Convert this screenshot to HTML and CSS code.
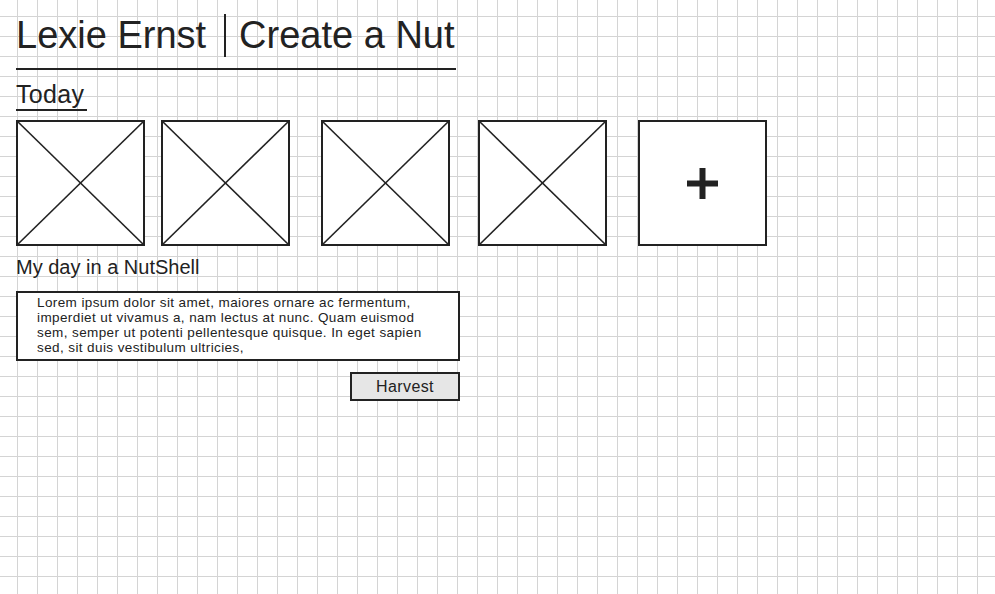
FILE: index.html
```html
<!DOCTYPE html>
<html lang="en">
<head>
<meta charset="utf-8">
<title>Create a Nut</title>
<link rel="stylesheet" href="styles.css">
</head>
<body>
<div class="page">
  <header class="header">
    <span class="name">Lexie Ernst</span>
    <span class="sep"></span>
    <span class="title">Create a Nut</span>
  </header>

  <h2 class="section">Today</h2>

  <div class="photos">
    <div class="photo">
      <svg viewBox="0 0 125 122" preserveAspectRatio="none"><line x1="0" y1="0" x2="125" y2="122"/><line x1="125" y1="0" x2="0" y2="122"/></svg>
    </div>
    <div class="photo gap-16">
      <svg viewBox="0 0 125 122" preserveAspectRatio="none"><line x1="0" y1="0" x2="125" y2="122"/><line x1="125" y1="0" x2="0" y2="122"/></svg>
    </div>
    <div class="photo gap-31">
      <svg viewBox="0 0 125 122" preserveAspectRatio="none"><line x1="0" y1="0" x2="125" y2="122"/><line x1="125" y1="0" x2="0" y2="122"/></svg>
    </div>
    <div class="photo gap-28">
      <svg viewBox="0 0 125 122" preserveAspectRatio="none"><line x1="0" y1="0" x2="125" y2="122"/><line x1="125" y1="0" x2="0" y2="122"/></svg>
    </div>
    <div class="photo add gap-31">
      <svg class="plus" viewBox="0 0 31 31"><rect x="0" y="12.5" width="31" height="6"/><rect x="12.5" y="0" width="6" height="31"/></svg>
    </div>
  </div>

  <h3 class="label">My day in a NutShell</h3>

  <div class="entry">
    <p class="entry-text">Lorem ipsum dolor sit amet, maiores ornare ac fermentum, imperdiet ut vivamus a, nam lectus at nunc. Quam euismod sem, semper ut potenti pellentesque quisque. In eget sapien sed, sit duis vestibulum ultricies,</p>
    <div class="actions">
      <button class="btn" type="button">Harvest</button>
    </div>
  </div>
</div>
</body>
</html>
```

FILE: styles.css
```css
html {
  background-color: #ffffff;
  background-image:
    linear-gradient(to right, #d4d4d4 1px, transparent 1px),
    linear-gradient(to bottom, #d4d4d4 1px, transparent 1px);
  background-size: 20px 20px;
  background-position: 17px 16px;
  min-height: 100%;
}

body {
  margin: 0;
  font-family: "Liberation Sans", Arial, Helvetica, sans-serif;
  color: #222222;
}

.page {
  padding: 13px 0 0 16px;
}

.header {
  display: flex;
  width: 440px;
  font-size: 38px;
  line-height: 44px;
  padding-bottom: 11px;
  border-bottom: 2px solid #222222;
}

.sep {
  width: 2px;
  background: #222222;
  margin: 1px 13px 0 18px;
}

.section {
  width: fit-content;
  margin: 10px 0 0;
  padding: 0 3px 1px 0;
  font-size: 25px;
  line-height: 28px;
  letter-spacing: 0.3px;
  font-weight: normal;
  border-bottom: 2px solid #222222;
}

.photos {
  display: flex;
  margin-top: 9px;
}

.photo {
  box-sizing: border-box;
  width: 129px;
  height: 126px;
  border: 2px solid #222222;
  background: #ffffff;
}

.photo svg {
  display: block;
  width: 100%;
  height: 100%;
}

.photo line {
  stroke: #222222;
  stroke-width: 1.6;
  vector-effect: non-scaling-stroke;
}

.gap-16 { margin-left: 16px; }
.gap-28 { margin-left: 28px; }
.gap-31 { margin-left: 31px; }

.add {
  display: flex;
  align-items: center;
  justify-content: center;
}

.photo .plus {
  width: 31px;
  height: 31px;
  fill: #222222;
}

.label {
  margin: 9px 0 0;
  font-size: 20px;
  line-height: 24px;
  font-weight: normal;
}

.entry {
  width: 444px;
  margin-top: 12px;
}

.entry-text {
  margin: 0;
  box-sizing: border-box;
  border: 2px solid #222222;
  background: #ffffff;
  padding: 2px 20px 4px 19px;
  font-size: 13.5px;
  line-height: 15px;
  letter-spacing: 0.4px;
}

.actions {
  display: flex;
  justify-content: flex-end;
  margin-top: 11px;
}

.btn {
  box-sizing: border-box;
  width: 110px;
  height: 29px;
  padding: 0;
  border: 2px solid #222222;
  background: #e6e6e6;
  color: #222222;
  font-family: "Liberation Sans", Arial, Helvetica, sans-serif;
  font-size: 16px;
  letter-spacing: 0.4px;
  line-height: 25px;
}
```
